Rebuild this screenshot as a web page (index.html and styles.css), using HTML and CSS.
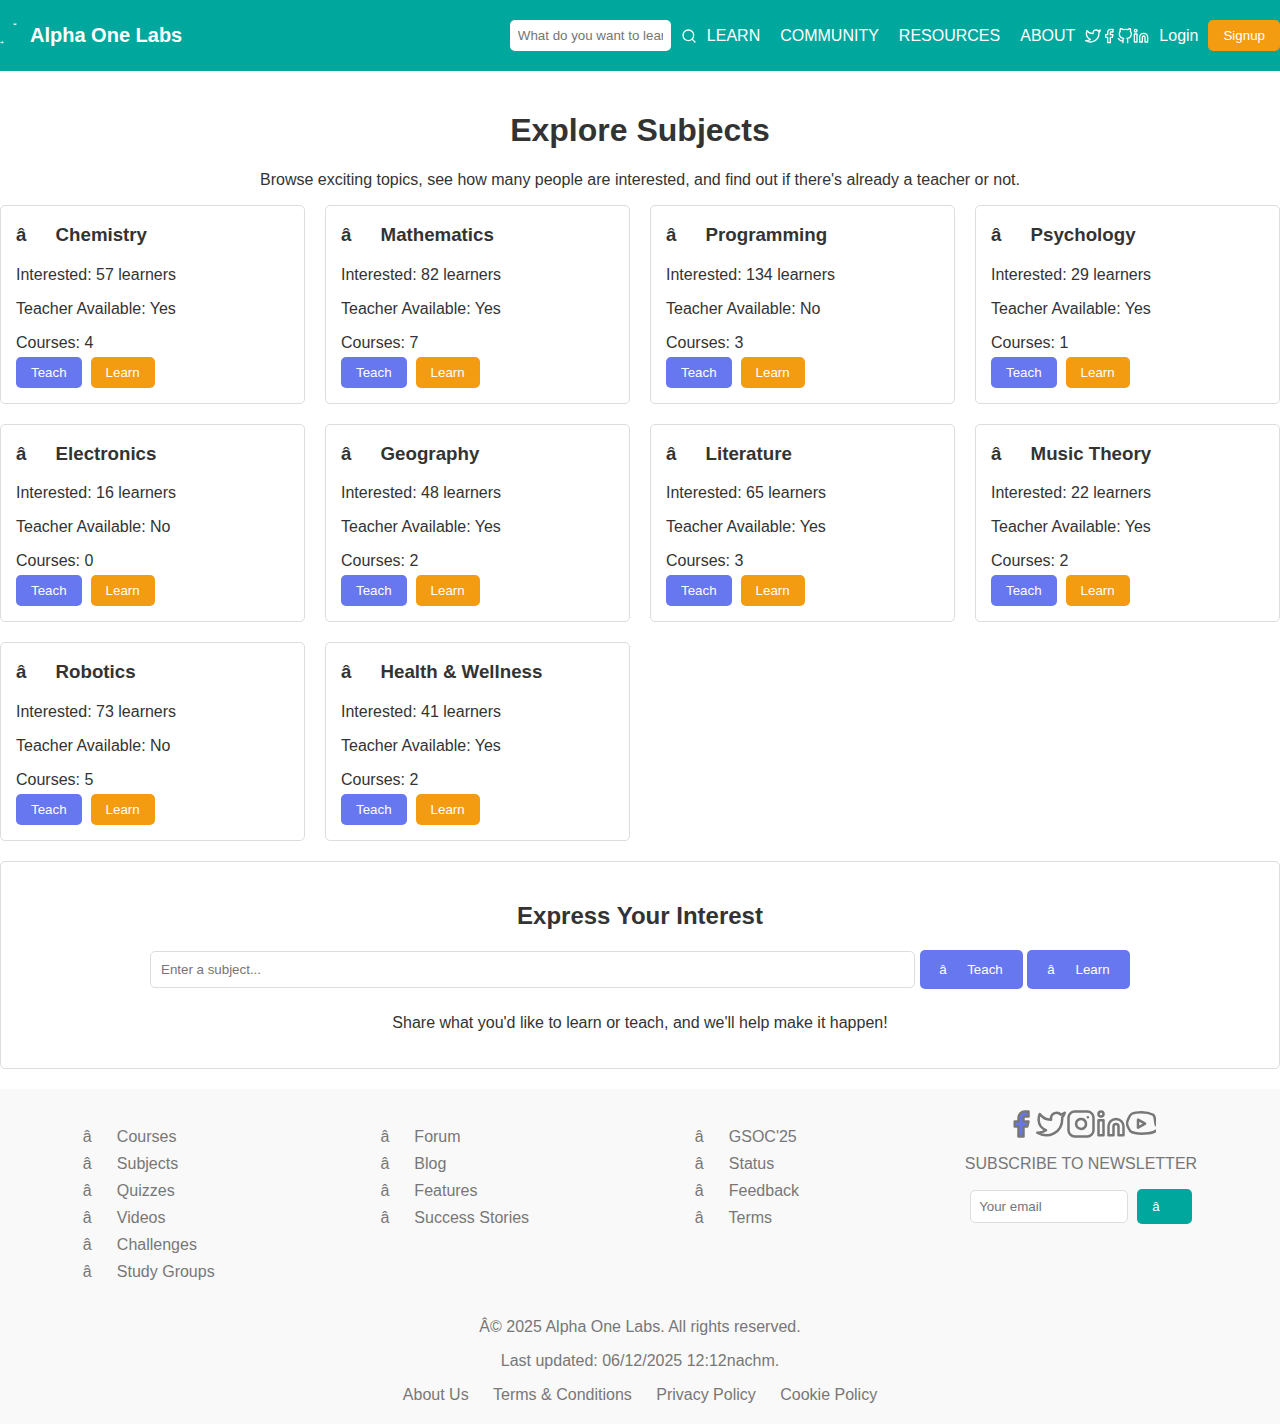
FILE: index.html
```html
<!DOCTYPE html>
<html lang="en">
<head>
<meta charset="utf-8">
<title>Alpha One Labs</title>
<link rel="stylesheet" href="styles.css">
</head>
<body>
<svg class="defs" width="0" height="0">
  <symbol id="twitter" viewBox="0 0 24 24"><path d="M23 3a10.9 10.9 0 0 1-3.14 1.53 4.48 4.48 0 0 0-7.86 3v1A10.66 10.66 0 0 1 3 4s-4 9 5 13a11.64 11.64 0 0 1-7 2c9 5 20 0 20-11.5a4.5 4.5 0 0 0-.08-.83A7.72 7.72 0 0 0 23 3z"/></symbol>
  <symbol id="facebook" viewBox="0 0 24 24"><path d="M18 2h-3a5 5 0 0 0-5 5v3H7v4h3v8h4v-8h3l1-4h-4V7a1 1 0 0 1 1-1h3z"/></symbol>
  <symbol id="github" viewBox="0 0 24 24"><path d="M9 19c-5 1.5-5-2.5-7-3m14 6v-3.87a3.37 3.37 0 0 0-.94-2.61c3.14-.35 6.44-1.54 6.44-7A5.44 5.44 0 0 0 20 4.77 5.07 5.07 0 0 0 19.91 1S18.73.65 16 2.48a13.38 13.38 0 0 0-7 0C6.27.65 5.09 1 5.09 1A5.07 5.07 0 0 0 5 4.77a5.44 5.44 0 0 0-1.5 3.78c0 5.42 3.3 6.61 6.44 7A3.37 3.37 0 0 0 9 18.13V22"/></symbol>
  <symbol id="linkedin" viewBox="0 0 24 24"><path d="M16 8a6 6 0 0 1 6 6v7h-4v-7a2 2 0 0 0-4 0v7h-4v-7a6 6 0 0 1 6-6z"/><rect x="2" y="9" width="4" height="12"/><circle cx="4" cy="4" r="2"/></symbol>
  <symbol id="instagram" viewBox="0 0 24 24"><rect x="2" y="2" width="20" height="20" rx="5"/><path d="M16 11.37A4 4 0 1 1 12.63 8 4 4 0 0 1 16 11.37zM17.5 6.5h.01"/></symbol>
  <symbol id="youtube" viewBox="0 0 24 24"><path d="M24 13C22.800 10.500 23.800 6.500 21.800 4.600 19 3.200 16 2.600 12.500 2.600 9 2.600 6.500 2.900 4.700 3.800 3.200 4.600 2.700 6 2.200 7.200 1.600 8.600.800 9.700.800 11.500c0 1.800.800 2.800 1.400 4.100.600 1.400 1.200 2.500 2.600 3 2.300.8 4.700 1.100 7.200 1.100 3.500 0 7-.1 9.600-1.100.900-.3 1.700-.7 2.600-1.300"/><path d="M9.6 8.500l5.700 3.250-5.700 3.250z"/></symbol>
</svg>
<header class="header">
  <div class="brand">
    <svg class="logo" viewBox="0 0 20 30"><path d="M13.500 3h3L15 3.800zM15 2.300v1.600M0 21.300l1 .3M2.200 20.400l1.200 1.400-1.800.3z"/></svg>
    <span>Alpha One Labs</span>
  </div>
  <div class="tools">
    <input class="search" type="text" placeholder="What do you want to learn?">
    <svg class="icon" viewBox="0 0 24 24"><circle cx="11" cy="11" r="8"/><path d="M21 21l-4.35-4.35"/></svg>
    <nav class="nav"><a>LEARN</a><a>COMMUNITY</a><a>RESOURCES</a><a>ABOUT</a></nav>
    <div class="social"><svg class="icon"><use href="#twitter"/></svg><svg class="icon"><use href="#facebook"/></svg><svg class="icon"><use href="#github"/></svg><svg class="icon"><use href="#linkedin"/></svg></div>
    <a>Login</a>
    <button class="btn orange">Signup</button>
  </div>
</header>
<main class="main">
  <h1>Explore Subjects</h1>
  <p class="intro">Browse exciting topics, see how many people are interested, and find out if there's already a teacher or not.</p>
  <section class="grid">
    <article class="card"><h3><span class="glyph">â</span> Chemistry</h3><p>Interested: 57 learners</p><p>Teacher Available: Yes</p><p>Courses: 4</p><div class="actions"><button class="btn blue">Teach</button><button class="btn orange">Learn</button></div></article>
    <article class="card"><h3><span class="glyph">â</span> Mathematics</h3><p>Interested: 82 learners</p><p>Teacher Available: Yes</p><p>Courses: 7</p><div class="actions"><button class="btn blue">Teach</button><button class="btn orange">Learn</button></div></article>
    <article class="card"><h3><span class="glyph">â</span> Programming</h3><p>Interested: 134 learners</p><p>Teacher Available: No</p><p>Courses: 3</p><div class="actions"><button class="btn blue">Teach</button><button class="btn orange">Learn</button></div></article>
    <article class="card"><h3><span class="glyph">â</span> Psychology</h3><p>Interested: 29 learners</p><p>Teacher Available: Yes</p><p>Courses: 1</p><div class="actions"><button class="btn blue">Teach</button><button class="btn orange">Learn</button></div></article>
    <article class="card"><h3><span class="glyph">â</span> Electronics</h3><p>Interested: 16 learners</p><p>Teacher Available: No</p><p>Courses: 0</p><div class="actions"><button class="btn blue">Teach</button><button class="btn orange">Learn</button></div></article>
    <article class="card"><h3><span class="glyph">â</span> Geography</h3><p>Interested: 48 learners</p><p>Teacher Available: Yes</p><p>Courses: 2</p><div class="actions"><button class="btn blue">Teach</button><button class="btn orange">Learn</button></div></article>
    <article class="card"><h3><span class="glyph">â</span> Literature</h3><p>Interested: 65 learners</p><p>Teacher Available: Yes</p><p>Courses: 3</p><div class="actions"><button class="btn blue">Teach</button><button class="btn orange">Learn</button></div></article>
    <article class="card"><h3><span class="glyph">â</span> Music Theory</h3><p>Interested: 22 learners</p><p>Teacher Available: Yes</p><p>Courses: 2</p><div class="actions"><button class="btn blue">Teach</button><button class="btn orange">Learn</button></div></article>
    <article class="card"><h3><span class="glyph">â</span> Robotics</h3><p>Interested: 73 learners</p><p>Teacher Available: No</p><p>Courses: 5</p><div class="actions"><button class="btn blue">Teach</button><button class="btn orange">Learn</button></div></article>
    <article class="card"><h3><span class="glyph">â</span> Health &amp; Wellness</h3><p>Interested: 41 learners</p><p>Teacher Available: Yes</p><p>Courses: 2</p><div class="actions"><button class="btn blue">Teach</button><button class="btn orange">Learn</button></div></article>
  </section>
  <section class="interest">
    <h2>Express Your Interest</h2>
    <div class="interest-form">
      <input class="subject" type="text" placeholder="Enter a subject...">
      <button class="btn blue large"><span class="glyph">â</span> Teach</button>
      <button class="btn blue large"><span class="glyph">â</span> Learn</button>
    </div>
    <p>Share what you'd like to learn or teach, and we'll help make it happen!</p>
  </section>
</main>
<footer class="footer">
  <div class="columns">
    <ul class="links"><li><span class="glyph">â</span> Courses</li><li><span class="glyph">â</span> Subjects</li><li><span class="glyph">â</span> Quizzes</li><li><span class="glyph">â</span> Videos</li><li><span class="glyph">â</span> Challenges</li><li><span class="glyph">â</span> Study Groups</li></ul>
    <ul class="links"><li><span class="glyph">â</span> Forum</li><li><span class="glyph">â</span> Blog</li><li><span class="glyph">â</span> Features</li><li><span class="glyph">â</span> Success Stories</li></ul>
    <ul class="links"><li><span class="glyph">â</span> GSOC'25</li><li><span class="glyph">â</span> Status</li><li><span class="glyph">â</span> Feedback</li><li><span class="glyph">â</span> Terms</li></ul>
    <div class="newsletter">
      <div class="social big"><svg class="icon filled"><use href="#facebook"/></svg><svg class="icon"><use href="#twitter"/></svg><svg class="icon"><use href="#instagram"/></svg><svg class="icon"><use href="#linkedin"/></svg><svg class="icon"><use href="#youtube"/></svg></div>
      <p>SUBSCRIBE TO NEWSLETTER</p>
      <div class="subscribe"><input class="email" type="email" placeholder="Your email"><button class="btn teal"><span class="glyph">â</span></button></div>
    </div>
  </div>
  <div class="legal">
    <p>Â© 2025 Alpha One Labs. All rights reserved.</p>
    <p>Last updated: 06/12/2025 12:12nachm.</p>
    <div class="legal-links"><a>About Us</a><a>Terms &amp; Conditions</a><a>Privacy Policy</a><a>Cookie Policy</a></div>
  </div>
</footer>
</body>
</html>
```
FILE: styles.css
```css
* { box-sizing: border-box; }
body { margin: 0; font: 16px/18px "Liberation Sans", Arial, sans-serif; color: #333; background: #fff; }
.defs { display: none; }
input, button { font: 13.333px/15px "Liberation Sans", Arial, sans-serif; }
input { color: #333; background: #fff; border: 1px solid #ddd; border-radius: 5px; }
input::placeholder { color: #757575; }
.btn { border: 0; border-radius: 5px; color: #fff; padding: 8px 15px; white-space: nowrap; }
.orange { background: #f39c12; }
.blue { background: #6777ef; }
.teal { background: #00a79d; padding: 10px 15px; }
.large { width: 103px; padding: 12px 0; }
.glyph { margin-right: 1.28em; }
.teal .glyph { margin-right: 1.29em; }
.icon { width: 16px; height: 16px; fill: none; stroke: currentColor; stroke-width: 2; stroke-linecap: round; stroke-linejoin: round; flex: none; }
.social { display: flex; }

.header { display: flex; justify-content: space-between; align-items: center; height: 71px; background: #00a79d; color: #fff; }
.brand { display: flex; align-items: center; gap: 10px; font-size: 20px; font-weight: bold; line-height: 23px; }
.logo { width: 20px; height: 30px; fill: #fff; stroke: #fff; stroke-width: .6; }
.tools { display: flex; align-items: center; gap: 10px; }
.search { width: 161px; height: 31px; padding: 8px; border: 0; }
.nav { display: flex; gap: 20px; }

.main { padding-top: 41.4px; }
h1 { margin: 0 0 21.4px; font-size: 32px; line-height: 37px; text-align: center; }
.intro { margin: 0 0 16.6px; text-align: center; }
.grid { display: grid; grid-template-columns: repeat(4, 1fr); gap: 20px; }
.card { border: 1px solid #ddd; border-radius: 5px; padding: 15px; height: 198.4px; }
.card h3 { margin: 0 0 19.5px; padding-top: 3px; font-size: 18.72px; line-height: 22px; }
.card p { margin: 0 0 16px; }
.card p:nth-of-type(3) { margin-bottom: 5px; }
.actions { display: flex; gap: 9px; }

.interest { margin: 20.2px 0 20px; height: 208px; border: 1px solid #ddd; border-radius: 5px; padding: 40px 20px 0; text-align: center; }
.interest h2 { margin: 0 0 20px; font-size: 24px; line-height: 28px; }
.interest-form { display: flex; justify-content: center; align-items: center; gap: 4.5px; }
.subject { width: 765px; height: 37px; padding: 10px; }
.interest p { margin: 25px 0 0; }

.footer { background: #f9f9f9; color: #777; padding: 20px 0; height: 335.2px; }
.columns { display: flex; justify-content: space-around; height: 209px; }
.links { list-style: none; margin: 0; padding: 19px 0 0; }
.links .glyph { margin-right: 1.29em; }
.links li { margin-bottom: 9px; }
.newsletter { text-align: center; }
.newsletter p { margin: 16px 0; }
.big { justify-content: center; }
.big .icon { width: 30px; height: 30px; }
.big .filled { fill: #6777ef; }
.subscribe { display: flex; justify-content: center; align-items: center; gap: 9px; }
.email { width: 158px; height: 33px; padding: 8px; }
.legal { text-align: center; }
.legal p { margin: 0 0 16px; }
.legal-links { display: flex; justify-content: center; gap: 24.45px; }
```
